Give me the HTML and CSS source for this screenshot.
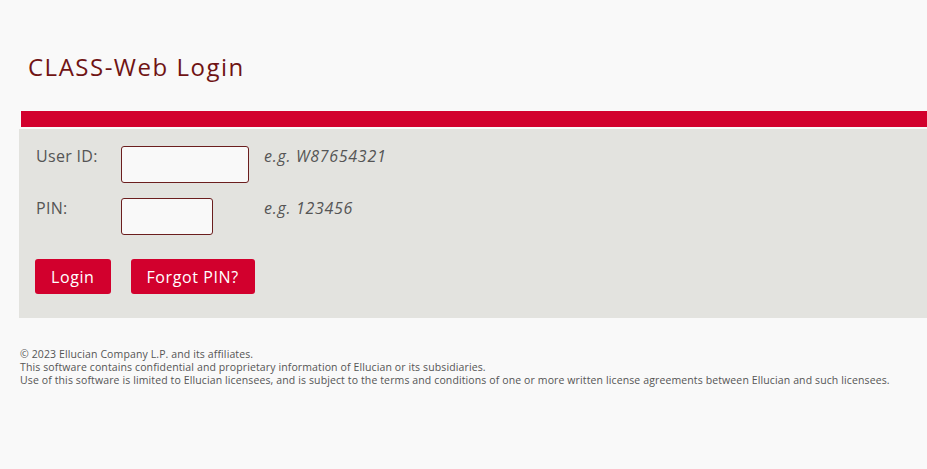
FILE: index.html
```html
<!DOCTYPE html>
<html lang="en">
<head>
<meta charset="utf-8">
<title>CLASS-Web Login</title>
<link rel="stylesheet" href="styles.css">
</head>
<body>
<header class="page-header">
  <h1 class="page-title">CLASS-Web Login</h1>
</header>
<main class="login">
  <div class="login-bar"></div>
  <form class="login-panel">
    <div class="login-grid">
      <label class="field-label" for="sid">User ID:</label>
      <input class="field-input field-input--id" id="sid" type="text">
      <span class="field-hint">e.g. W87654321</span>
      <label class="field-label" for="pin">PIN:</label>
      <input class="field-input field-input--pin" id="pin" type="password">
      <span class="field-hint">e.g. 123456</span>
    </div>
    <div class="login-actions">
      <button class="btn" type="button">Login</button>
      <button class="btn" type="button">Forgot PIN?</button>
    </div>
  </form>
</main>
<footer class="page-footer">
  <p>© 2023 Ellucian Company L.P. and its affiliates.</p>
  <p>This software contains confidential and proprietary information of Ellucian or its subsidiaries.</p>
  <p>Use of this software is limited to Ellucian licensees, and is subject to the terms and conditions of one or more written license agreements between Ellucian and such licensees.</p>
</footer>
</body>
</html>
```
FILE: styles.css
```css
* { box-sizing: border-box; }
html, body {
  margin: 0;
  padding: 0;
  background: #f9f9f9;
  font-family: "Open Sans", "Liberation Sans", sans-serif;
  color: #555;
}
.page-header {
  padding: 51px 0 0 28px;
  height: 111px;
}
.page-title {
  margin: 0;
  font-weight: 400;
  font-size: 24px;
  line-height: 32px;
  letter-spacing: 1.5px;
  color: #701414;
}
.login-bar {
  margin-left: 21px;
  height: 16px;
  background: #d2002d;
}
.login-panel {
  margin: 2px 0 0 19px;
  background: #e3e3df;
  padding: 17px 17px 24px 16px;
}
.login-grid {
  display: grid;
  grid-template-columns: 86px auto 1fr;
  row-gap: 15px;
  align-items: start;
}
.field-label {
  grid-column: 1;
  padding: 0 0 0 1px;
  font-size: 16px;
  line-height: 20px;
  letter-spacing: 0.3px;
  color: #555;
}
.field-input {
  height: 37px;
  border: 1px solid #6b1e1e;
  border-radius: 3px;
  background: #f9f9f9;
  font: inherit;
  padding: 0 6px;
}
.field-input--id { width: 128px; }
.field-input--pin { width: 92px; }
.field-hint {
  margin-left: 15px;
  font-size: 16px;
  line-height: 20px;
  letter-spacing: 0.7px;
  font-style: italic;
  color: #555;
}
.login-actions {
  display: flex;
  gap: 20px;
  margin-top: 24px;
}
.btn {
  height: 35px;
  padding: 0 16px;
  border: 0;
  border-radius: 3px;
  background: #d2002d;
  color: #fff;
  font-family: inherit;
  font-size: 16px;
  letter-spacing: 0.6px;
  cursor: pointer;
}
.page-footer {
  padding: 30px 0 0 20px;
  font-size: 10.5px;
  line-height: 13px;
  letter-spacing: 0.12px;
  color: #555;
}
.page-footer p { margin: 0; }
```
